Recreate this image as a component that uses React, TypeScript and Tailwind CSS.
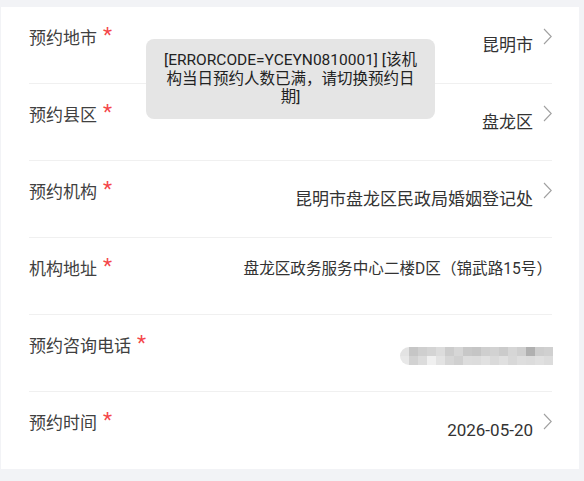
import React from "react";

type Row = {
  label: string;
  value?: string;
  chevron?: boolean;
  kind?: "text" | "address" | "phone";
};

const rows: Row[] = [
  { label: "预约地市", value: "昆明市", chevron: true },
  { label: "预约县区", value: "盘龙区", chevron: true },
  { label: "预约机构", value: "昆明市盘龙区民政局婚姻登记处", chevron: true },
  { label: "机构地址", value: "盘龙区政务服务中心二楼D区（锦武路15号）", kind: "address" },
  { label: "预约咨询电话", kind: "phone" },
  { label: "预约时间", value: "2026-05-20", chevron: true },
];

const mosaicTop = [
  "#e3e3e3", "#c6c6c6", "#cfcfcf", "#d4d4d4", "#dcdcdc", "#cccccc", "#d6d6d6", "#c8c8c8", "#c5c5c5",
  "#cfcfcf", "#d2d2d2", "#cbcbcb", "#d6d6d6", "#cfcfcf", "#b0b0b0", "#cdcdcd", "#d0d0d0",
];
const mosaicBottom = [
  "#e8e8e8", "#d2d2d2", "#dcdcdc", "#f0f0f0", "#e3e3e3", "#d6d6d6", "#d0d0d0", "#dddddd", "#dcdcdc",
  "#e1e1e1", "#dadada", "#e0e0e0", "#d8d8d8", "#dedede", "#dcdcdc", "#e0e0e0", "#dcdcdc",
];

function Chevron() {
  return (
    <svg width="10" height="17" viewBox="0 0 10 17" className="ml-[9px] mt-[21px] shrink-0">
      <polyline points="2,1 9.2,8.5 2,16" fill="none" stroke="#a0a0a0" strokeWidth="1.1" />
    </svg>
  );
}

function Mosaic() {
  return (
    <div className="-mr-[1px] mt-[32px] flex flex-col overflow-hidden rounded-l-full">
      <div className="flex">
        {mosaicTop.map((c, i) => (
          <div key={i} className="h-[9px] w-[9px]" style={{ backgroundColor: c }} />
        ))}
      </div>
      <div className="flex">
        {mosaicBottom.map((c, i) => (
          <div key={i} className="h-[9px] w-[9px]" style={{ backgroundColor: c }} />
        ))}
      </div>
    </div>
  );
}

export default function App() {
  return (
    <div className="relative h-[481px] w-[584px] bg-[#f2f3f6] pl-[1px] pr-[5px] pt-[7px] font-['Roboto','Noto_Sans_CJK_SC',sans-serif]">
      <div className="h-[462px] bg-white pl-[28px] pr-[27px]">
        {rows.map((r, i) => (
          <div
            key={i}
            className={`flex h-[77px] items-start justify-between ${i < rows.length - 1 ? "border-b border-[#f0f0f0]" : ""}`}
          >
            <div className="flex items-start pt-[19px] text-[17px] leading-[24px] text-[#404040]">
              <span>{r.label}</span>
              <span className="relative -top-[3px] ml-[6px] text-[21px] leading-[24px] text-[#f4474a]">*</span>
            </div>
            {r.kind === "phone" ? (
              <Mosaic />
            ) : r.kind === "address" ? (
              <div className="pt-[19px] text-[15.6px] leading-[24px] text-[#333333]">{r.value}</div>
            ) : (
              <div className="flex items-start">
                <div className="pt-[26px] text-[17px] leading-[24px] text-[#333333]">{r.value}</div>
                {r.chevron && <Chevron />}
              </div>
            )}
          </div>
        ))}
      </div>
      <div className="absolute left-[146px] top-[39px] w-[289px] rounded-[8px] bg-[#e5e5e5] px-4 py-3 text-center text-[15.5px] leading-[18.5px] text-[#222222]">
        [ERRORCODE=YCEYN0810001] [该机构当日预约人数已满，请切换预约日期]
      </div>
    </div>
  );
}
